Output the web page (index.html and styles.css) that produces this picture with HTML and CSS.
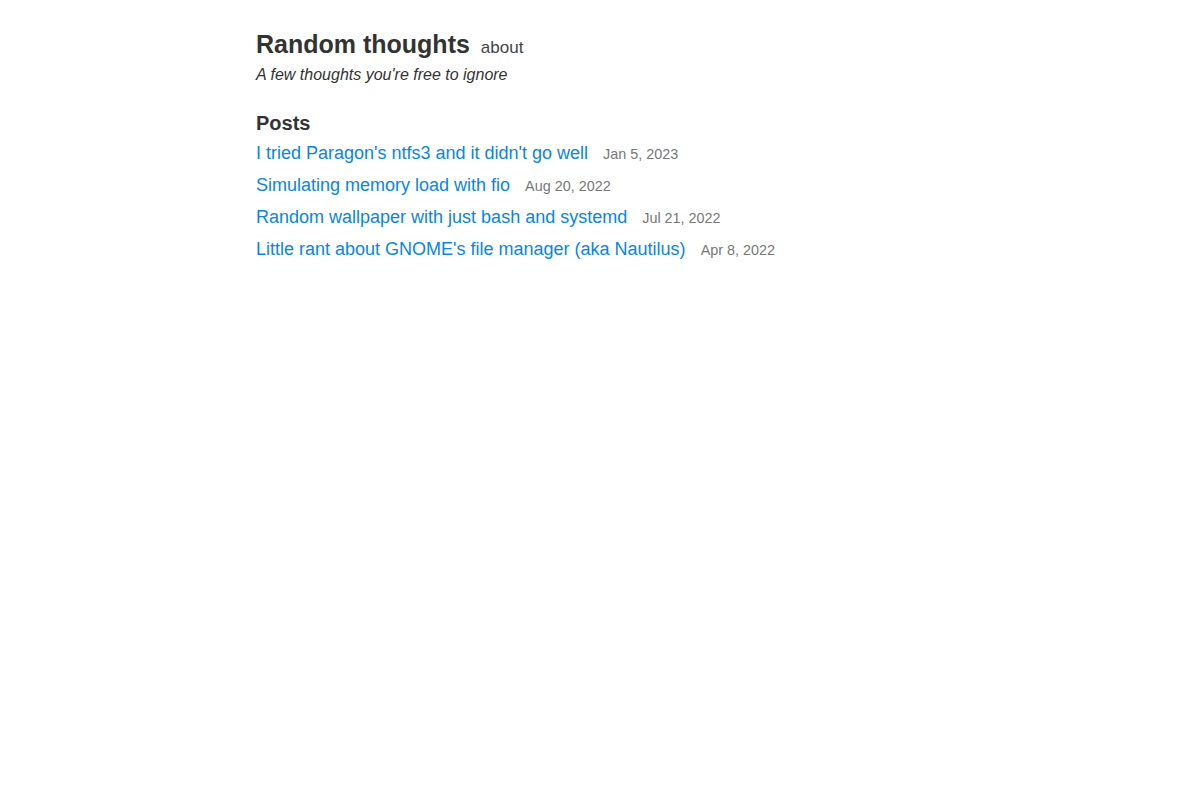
FILE: index.html
```html
<!DOCTYPE html>
<html>
<head>
<meta charset="utf-8">
<link rel="stylesheet" href="styles.css">
</head>
<body>
<div class="container">
  <header class="header">
    <div class="title-row">
      <h1 class="site-title">Random thoughts</h1>
      <a class="nav-link" href="#">about</a>
    </div>
    <p class="tagline">A few thoughts you're free to ignore</p>
  </header>
  <section class="posts">
    <h2 class="posts-title">Posts</h2>
    <ul class="post-list">
      <li class="post-item"><a class="post-link" href="#">I tried Paragon's ntfs3 and it didn't go well</a><span class="post-date">Jan 5, 2023</span></li>
      <li class="post-item"><a class="post-link" href="#">Simulating memory load with fio</a><span class="post-date">Aug 20, 2022</span></li>
      <li class="post-item"><a class="post-link" href="#">Random wallpaper with just bash and systemd</a><span class="post-date">Jul 21, 2022</span></li>
      <li class="post-item"><a class="post-link" href="#">Little rant about GNOME's file manager (aka Nautilus)</a><span class="post-date">Apr 8, 2022</span></li>
    </ul>
  </section>
</div>
</body>
</html>
```
FILE: styles.css
```css
html, body {
  margin: 0;
  padding: 0;
  background: #fff;
}
body {
  font-family: "Liberation Sans", Arial, sans-serif;
  color: #333;
}
.container {
  max-width: 688px;
  margin: 0 auto;
  padding-top: 26px;
}
.title-row {
  display: flex;
  align-items: baseline;
  gap: 11px;
}
.site-title {
  margin: 0;
  font-size: 25px;
  font-weight: bold;
  line-height: 36px;
  color: #333;
}
.nav-link {
  font-size: 17px;
  color: #444;
  text-decoration: none;
}
.tagline {
  margin: 1px 0 0;
  font-size: 16px;
  font-style: italic;
  line-height: 24px;
  color: #333;
}
.posts {
  margin-top: 22px;
}
.posts-title {
  margin: 0;
  font-size: 20px;
  font-weight: bold;
  line-height: 28px;
  color: #333;
}
.post-list {
  list-style: none;
  margin: 0;
  padding: 0;
}
.post-item {
  display: flex;
  align-items: baseline;
  gap: 15px;
  height: 32px;
  line-height: 32px;
}
.post-link {
  font-size: 18px;
  color: #0a84e8;
  text-decoration: none;
}
.post-date {
  font-size: 14.4px;
  color: #777;
}
```
